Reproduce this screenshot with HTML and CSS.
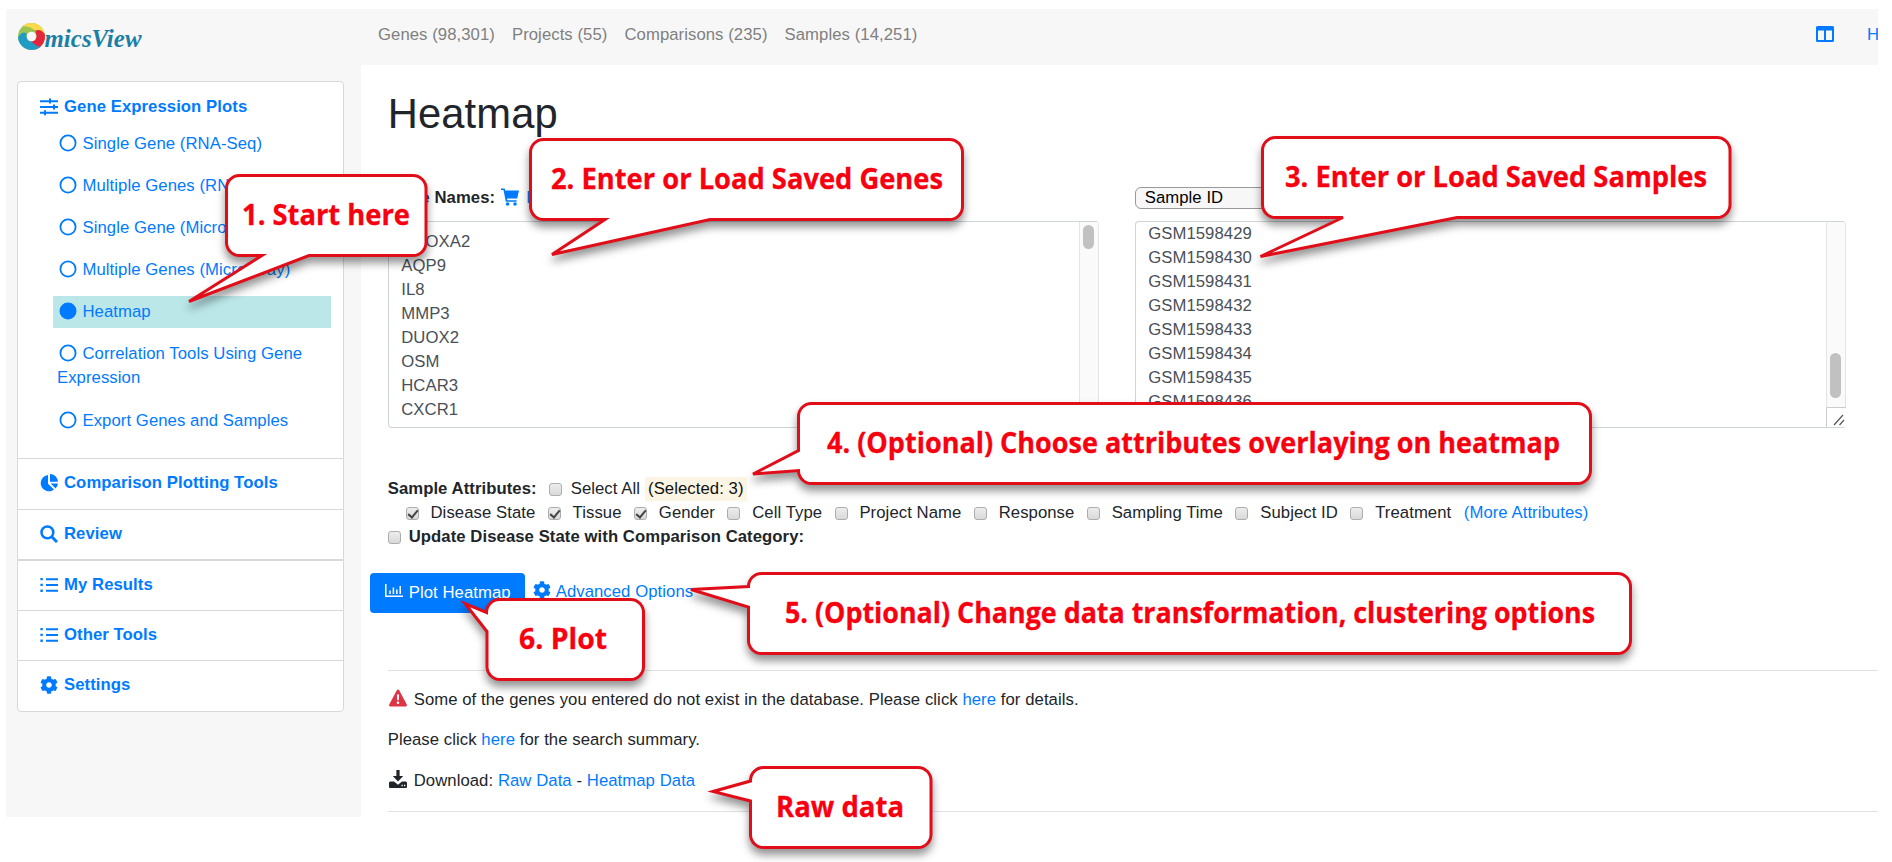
FILE: index.html
```html
<!DOCTYPE html>
<html lang="en">
<head>
<meta charset="utf-8">
<title>OmicsView - Heatmap</title>
<link rel="stylesheet" href="styles.css">
</head>
<body>
<svg class="defs" width="0" height="0">
  <symbol id="gear" viewBox="0 0 512 512"><path d="M487.400 315.700l-42.600-24.600c4.300-23.200 4.300-47 0-70.200l42.600-24.600c4.900-2.800 7.100-8.600 5.500-14-11.100-35.600-30-67.800-54.700-94.600-3.800-4.100-10-5.100-14.800-2.300L380.800 110c-17.900-15.400-38.500-27.300-60.800-35.100V25.800c0-5.600-3.900-10.500-9.400-11.700-36.700-8.200-74.300-7.800-109.200 0-5.500 1.200-9.400 6.100-9.400 11.700V75c-22.200 7.900-42.800 19.800-60.800 35.100L88.700 85.500c-4.900-2.800-11-1.900-14.800 2.300-24.700 26.700-43.600 58.900-54.700 94.600-1.700 5.400.6 11.200 5.500 14L67.300 221c-4.300 23.200-4.300 47 0 70.200l-42.600 24.600c-4.900 2.800-7.100 8.600-5.500 14 11.100 35.600 30 67.800 54.700 94.600 3.800 4.100 10 5.100 14.800 2.300l42.600-24.600c17.900 15.400 38.500 27.300 60.800 35.100v49.200c0 5.600 3.900 10.500 9.400 11.700 36.700 8.200 74.300 7.800 109.200 0 5.500-1.200 9.400-6.100 9.400-11.700v-49.200c22.200-7.900 42.800-19.800 60.800-35.100l42.600 24.600c4.900 2.800 11 1.900 14.800-2.300 24.700-26.700 43.600-58.900 54.700-94.600 1.500-5.500-.7-11.300-5.600-14.100zM256 336c-44.100 0-80-35.900-80-80s35.900-80 80-80 80 35.900 80 80-35.900 80-80 80z"/></symbol>
  <symbol id="list" viewBox="0 0 18 18"><path d="M6 2.200h12v2H6zM6 8h12v2H6zM6 13.800h12v2H6zM.4 2h2.400v2.300H.4zM.4 7.800h2.400v2.300H.4zM.4 13.600h2.400v2.300H.4z"/></symbol>
  <symbol id="ring" viewBox="0 0 18 18"><circle cx="9" cy="9" r="7.600" fill="none" stroke="currentColor" stroke-width="1.800"/></symbol>
</svg>

<div class="app">
  <header class="topbar">
    <svg class="logo" viewBox="0 0 130 34" width="130" height="34">
      <g transform="translate(14.500 17.500)">
        <circle r="13.500" fill="#9bc450"/>
        <path d="M-9-10.200A13.600 13.600 0 0 1 13.400 2Q11-6 4-6Q-3-11-9-10.200z" fill="#fbd94b"/>
        <path d="M4-6Q10-8 13.400-2A13.600 13.600 0 0 1 5 12.700Q-1 12 -4 5Q4 6 5 0z" fill="#e3263c"/>
        <path d="M-13.500 1Q-9-6-5-3Q-6 4 0 5Q6 11 9 10A13.600 13.600 0 0 1-13.500 1z" fill="#1f9cc6"/>
        <circle r="4.800" fill="#f7f7f7"/>
      </g>
      <text x="27.500" y="28" textLength="97" lengthAdjust="spacingAndGlyphs" class="logo-text">micsView</text>
    </svg>
    <nav class="nav"><a>Genes (98,301)</a><a>Projects (55)</a><a>Comparisons (235)</a><a>Samples (14,251)</a></nav>
    <div class="nav-right">
      <svg width="18" height="16" viewBox="0 0 18 16"><path fill-rule="evenodd" d="M1.500 0h15A1.500 1.500 0 0 1 18 1.500v13a1.500 1.500 0 0 1-1.500 1.500h-15A1.500 1.500 0 0 1 0 14.500v-13A1.500 1.500 0 0 1 1.500 0zM2 4.500V14h6V4.500zM10 4.500V14h6V4.500z"/></svg>
      <a class="home">H</a>
    </div>
  </header>

  <div class="columns">
    <aside class="sidebar">
      <div class="menu">
        <section class="group first">
          <h4><svg viewBox="0 0 18 18"><path d="M0 2.200h18v2H0zM0 8h18v2H0zM0 13.800h18v2H0zM9 0.600h2v5H9zM13 6.500h2v5h-2zM4 12.200h2v5H4z"/></svg>Gene Expression Plots</h4>
          <ul>
            <li><svg><use href="#ring"/></svg>Single Gene (RNA-Seq)</li>
            <li><svg><use href="#ring"/></svg>Multiple Genes (RNA-Seq)</li>
            <li><svg><use href="#ring"/></svg>Single Gene (Microarray)</li>
            <li><svg><use href="#ring"/></svg>Multiple Genes (Microarray)</li>
            <li class="active"><svg viewBox="0 0 18 18"><circle cx="9" cy="9" r="8.500"/></svg>Heatmap</li>
            <li><svg><use href="#ring"/></svg>Correlation Tools Using Gene Expression</li>
            <li><svg><use href="#ring"/></svg>Export Genes and Samples</li>
          </ul>
        </section>
        <section class="group"><h4><svg viewBox="0 0 18 18"><path d="M8 9.800V1A8.200 8.200 0 1 0 14 15.600zM10 0v7.800h7.900A8 8 0 0 0 10 0zM10.600 9.500l5 5A8 8 0 0 0 18 9.500z"/></svg>Comparison Plotting Tools</h4></section>
        <section class="group"><h4><svg viewBox="0 0 18 18"><path d="M11.500 11.500L17 17" stroke="currentColor" stroke-width="3"/><circle cx="7.400" cy="7.400" r="5.900" fill="none" stroke="currentColor" stroke-width="2.500"/></svg>Review</h4></section>
        <section class="group thick"><h4><svg><use href="#list"/></svg>My Results</h4></section>
        <section class="group"><h4><svg><use href="#list"/></svg>Other Tools</h4></section>
        <section class="group"><h4><svg><use href="#gear"/></svg>Settings</h4></section>
      </div>
    </aside>

    <main class="main">
      <h1>Heatmap</h1>
      <div class="inputs">
        <div class="field">
          <div class="field-head"><b>Gene Names:</b><svg class="cart" viewBox="0 0 18 18"><path d="M0 .4h3.700l.5 2H18l-1.800 8.200H6l.3 1.600h9.300v1.600H4.800L2.500 2H0z"/><circle cx="6.600" cy="16" r="1.800"/><circle cx="14" cy="16" r="1.800"/></svg><a>Load</a></div>
          <div class="area genes"><div class="lines">DUOXA2<br>AQP9<br>IL8<br>MMP3<br>DUOX2<br>OSM<br>HCAR3<br>CXCR1</div><div class="track"><i class="thumb"></i></div></div>
        </div>
        <div class="field">
          <div class="field-head"><span class="select">Sample ID</span></div>
          <div class="area samples"><div class="lines">GSM1598429<br>GSM1598430<br>GSM1598431<br>GSM1598432<br>GSM1598433<br>GSM1598434<br>GSM1598435<br>GSM1598436</div><div class="track"><i class="thumb"></i><svg class="grip" viewBox="0 0 20 20"><path d="M.500 20V.500H20" fill="none" stroke="#ccc"/><path d="M8 18L17 8M13.500 18L18 13" fill="none" stroke="#555" stroke-width="1.200"/></svg></div></div>
        </div>
      </div>

      <div class="row"><b>Sample Attributes:</b><i class="cb all"></i><span>Select All</span><span class="selected">(Selected: 3)</span></div>
      <div class="row attrs">
        <label><i class="cb on"></i>Disease State</label><label><i class="cb on"></i>Tissue</label><label><i class="cb on"></i>Gender</label><label><i class="cb"></i>Cell Type</label><label><i class="cb"></i>Project Name</label><label><i class="cb"></i>Response</label><label><i class="cb"></i>Sampling Time</label><label><i class="cb"></i>Subject ID</label><label><i class="cb"></i>Treatment</label><a>(More Attributes)</a>
      </div>
      <div class="row"><i class="cb update"></i><b>Update Disease State with Comparison Category:</b></div>

      <div class="actions">
        <span class="button"><svg viewBox="0 0 18 14"><path d="M.800 0v12.200H18M5 10V6.500M8.400 10V3.500M11.800 10V5.500M15.200 10V2" fill="none" stroke="currentColor" stroke-width="1.500"/></svg>Plot Heatmap</span>
        <a class="advanced"><svg><use href="#gear"/></svg>Advanced Options</a>
      </div>

      <div class="result">
        <p><svg viewBox="0 0 18 18"><path fill="#dc3545" d="M9 .5q.8 0 1.200.8l7.600 14.200q.7 1.800-1.100 2H1.300q-1.800-.2-1.100-2L7.800 1.300Q8.200.5 9 .5z"/><path fill="#fff" d="M7.900 5.500h2.200l-.3 5.800H8.200z"/><circle cx="9" cy="13.700" r="1.300" fill="#fff"/></svg>Some of the genes you entered do not exist in the database. Please click <a>here</a> for details.</p>
        <p>Please click <a>here</a> for the search summary.</p>
        <p><svg viewBox="0 0 18 18"><path d="M7.400 0h3.200v6h3.600L9 11.500 3.800 6h3.600z"/><path d="M1 11.500h4l4 3.300 4-3.300h4l1 1V17q0 1-1 1H1q-1 0-1-1v-4.500z"/><path d="M12.500 15.500h1.300M15 15.500h1.300" stroke="#fff" stroke-width="1.300"/></svg>Download: <a>Raw Data</a> - <a>Heatmap Data</a></p>
      </div>
    </main>
  </div>
</div>

<svg class="callouts" viewBox="0 0 1892 862" width="1892" height="862">
  <g class="bubbles">
    <path d="M239.500 175.500H413a13 13 0 0 1 13 13V242.500a13 13 0 0 1-13 13H309L189 301.500 262 255.500H239.500a13 13 0 0 1-13-13V188.500a13 13 0 0 1 13-13z"/>
    <path d="M543.500 139.500H949.500a13 13 0 0 1 13 13V206.500a13 13 0 0 1-13 13H710L552 254.500 605 219.500H543.500a13 13 0 0 1-13-13V152.500a13 13 0 0 1 13-13z"/>
    <path d="M1275.500 137.500H1717a13 13 0 0 1 13 13V204.500a13 13 0 0 1-13 13H1457L1260.500 256.500 1343 217.500H1275.500a13 13 0 0 1-13-13V150.500a13 13 0 0 1 13-13z"/>
    <path d="M811.500 403.500H1577.500a13 13 0 0 1 13 13V470.500a13 13 0 0 1-13 13H811.500a13 13 0 0 1-13-13L753 474 798.500 450.500V416.500a13 13 0 0 1 13-13z"/>
    <path d="M761.500 573.500H1617.500a13 13 0 0 1 13 13V640.500a13 13 0 0 1-13 13H761.500a13 13 0 0 1-13-13V607L691 589.500 748.500 586.500a13 13 0 0 1 13-13z"/>
    <path d="M500 599.500H630.500a13 13 0 0 1 13 13V666.500a13 13 0 0 1-13 13H500a13 13 0 0 1-13-13V631.500L465 603.500 486.500 612.500a13 13 0 0 1 13.500-13z"/>
    <path d="M763.500 767.500H918a13 13 0 0 1 13 13V834.500a13 13 0 0 1-13 13H763.500a13 13 0 0 1-13-13V801L713 791.500 750.500 781a13 13 0 0 1 13-13.500z"/>
  </g>
  <g class="captions">
    <text x="242" y="225" textLength="168" lengthAdjust="spacingAndGlyphs">1. Start here</text>
    <text x="551" y="189" textLength="392" lengthAdjust="spacingAndGlyphs">2. Enter or Load Saved Genes</text>
    <text x="1285" y="187" textLength="422" lengthAdjust="spacingAndGlyphs">3. Enter or Load Saved Samples</text>
    <text x="827" y="453" textLength="733" lengthAdjust="spacingAndGlyphs">4. (Optional) Choose attributes overlaying on heatmap</text>
    <text x="785" y="623" textLength="810" lengthAdjust="spacingAndGlyphs">5. (Optional) Change data transformation, clustering options</text>
    <text x="519" y="649" textLength="88" lengthAdjust="spacingAndGlyphs">6. Plot</text>
    <text x="776" y="817" textLength="128" lengthAdjust="spacingAndGlyphs">Raw data</text>
  </g>
</svg>
</body>
</html>
```

FILE: styles.css
```css
* { box-sizing: border-box; }
body {
  margin: 0;
  width: 1892px;
  height: 862px;
  overflow: hidden;
  background: #fff;
  color: #212529;
  font: 16.7px/24px "Liberation Sans", Arial, sans-serif;
  letter-spacing: .07px;
}
.defs { position: absolute; }
svg { fill: currentColor; }
a { color: #007bff; }
h1, h4, ul, p { margin: 0; padding: 0; }

.app { width: 1878px; height: 817px; padding: 9px 0 0 6px; display: flex; flex-direction: column; overflow: hidden; }
.topbar { height: 56px; background: #f7f7f7; display: flex; flex: none; overflow: hidden; }
.logo { margin: 10px 231px 0 11px; flex: none; }
.logo-text { font: italic bold 25px "Liberation Serif", serif; fill: #1b7fa5; }
.nav { display: flex; gap: 17px; padding-top: 13.500px; white-space: nowrap; }
.nav a { color: #808080; }
.nav-right { margin-left: auto; width: 61px; display: flex; gap: 33px; padding-top: 17px; color: #007bff; flex: none; }
.nav-right svg { flex: none; margin-left: -1px; }
.home { margin-top: -3px; width: 11px; overflow: hidden; }

.columns { display: flex; flex: 1; }
.sidebar { width: 355px; background: #f7f7f7; padding: 16px 0 0 11px; flex: none; }
.menu { width: 327px; background: #fff; border: 1px solid #d9d9d9; border-radius: 4px; color: #007bff; }
.group { height: 50.600px; padding: 12px 0 0 22px; border-top: 1px solid #d9d9d9; }
.group.first { height: 376px; border-top: 0; padding-top: 12.500px; }
.group.thick { border-top-width: 2px; }
.group h4 { font-size: 16.700px; display: flex; align-items: center; }
.group svg { width: 18px; height: 18px; }
.group h4 svg { margin-right: 6px; }
.group ul { list-style: none; margin: 9.500px 12px 0 13px; display: flex; flex-direction: column; gap: 10.100px; }
.group li { padding: 4px 20px 4px 4px; }
.group li svg { margin: 0 6px 0 1.500px; vertical-align: -3px; }
.group li.active { background: #bbe7e9; }

.main { flex: 1; padding-left: 26.700px; min-width: 0; }
h1 { font-size: 41.700px; font-weight: 400; line-height: 50px; margin-top: 24px; letter-spacing: .15px; }
.inputs { display: flex; gap: 36px; margin-top: 47px; }
.field { width: 711px; }
.field-head { height: 35px; display: flex; align-items: flex-start; white-space: nowrap; }
.cart { width: 18px; height: 18px; margin: 2px 7px 0 6px; color: #007bff; }
.select { width: 240px; height: 22px; margin-top: 1px; padding-left: 9px; line-height: 20px; border: 1px solid #999; border-radius: 6px; background: #f7f7f7; color: #000; }
.area { height: 207px; border: 1px solid #ced4da; border-right: 0; border-radius: 4px; display: flex; justify-content: space-between; overflow: hidden; color: #495057; }
.area .lines { padding: 7.500px 0 0 12.500px; }
.samples .lines { padding: 0 0 0 12.500px; }
.track { width: 20px; background: #fafafa; border-left: 1px solid #e5e5e5; border-right: 1px solid #e5e5e5; display: flex; flex-direction: column; align-items: center; }
.thumb { width: 11px; height: 24px; margin-top: 3px; border-radius: 6px; background: #c1c1c1; flex: none; }
.samples .thumb { height: 45px; margin-top: 131px; }
.grip { width: 20px; height: 20px; margin-top: 9px; background: #fff; flex: none; }

.row { height: 24px; display: flex; white-space: nowrap; align-items: center; }
.inputs + .row { margin-top: 49px; }
.cb { width: 13px; height: 13px; border: 1px solid #adadad; border-radius: 3px; background: linear-gradient(#ededed, #d9d9d9); flex: none; display: inline-block; }
.cb.on::after { content: ""; display: block; width: 8px; height: 4px; margin: 2px 0 0 1px; border-left: 2.500px solid #444; border-bottom: 2.500px solid #444; transform: rotate(-50deg); }
.cb.all { margin: 0 9px 0 12px; }
.cb.update { margin-right: 8px; }
.selected { background: #fcf5e3; color: #111; padding: 0 3px; margin-left: 5px; }
.attrs { padding-left: 18px; gap: 12.500px; }
.attrs label { display: flex; align-items: center; gap: 11.800px; }

.actions { display: flex; margin: 19px 0 0 -18px; height: 40px; color: #007bff; }
.row + .actions { margin-top: 24px; }
.button { width: 155px; background: #007bff; color: #fff; border-radius: 4px; padding: 8px 0 0 15px; }
.button svg { width: 18px; height: 14px; margin-right: 6px; }
.advanced { padding: 7px 0 0 8px; }
.advanced svg { width: 18px; height: 18px; margin-right: 5px; vertical-align: -2px; }

.result { margin-top: 57px; height: 142px; border-top: 1px solid #e2e2e2; border-bottom: 1px solid #e2e2e2; padding-top: 16.500px; }
.result p { height: 40.700px; white-space: nowrap; }
.result svg { width: 20px; height: 18px; margin-right: 6px; vertical-align: -2px; }

.callouts { position: absolute; left: 0; top: 0; }
.bubbles path { fill: #fff; stroke: #e10e1a; stroke-width: 3px; filter: drop-shadow(0 6px 4px rgba(0, 0, 0, .42)); }
.captions { font: 700 28.500px "Open Sans", sans-serif; letter-spacing: 0; fill: #f7000f; stroke: #f7000f; stroke-width: .3px; }
```
